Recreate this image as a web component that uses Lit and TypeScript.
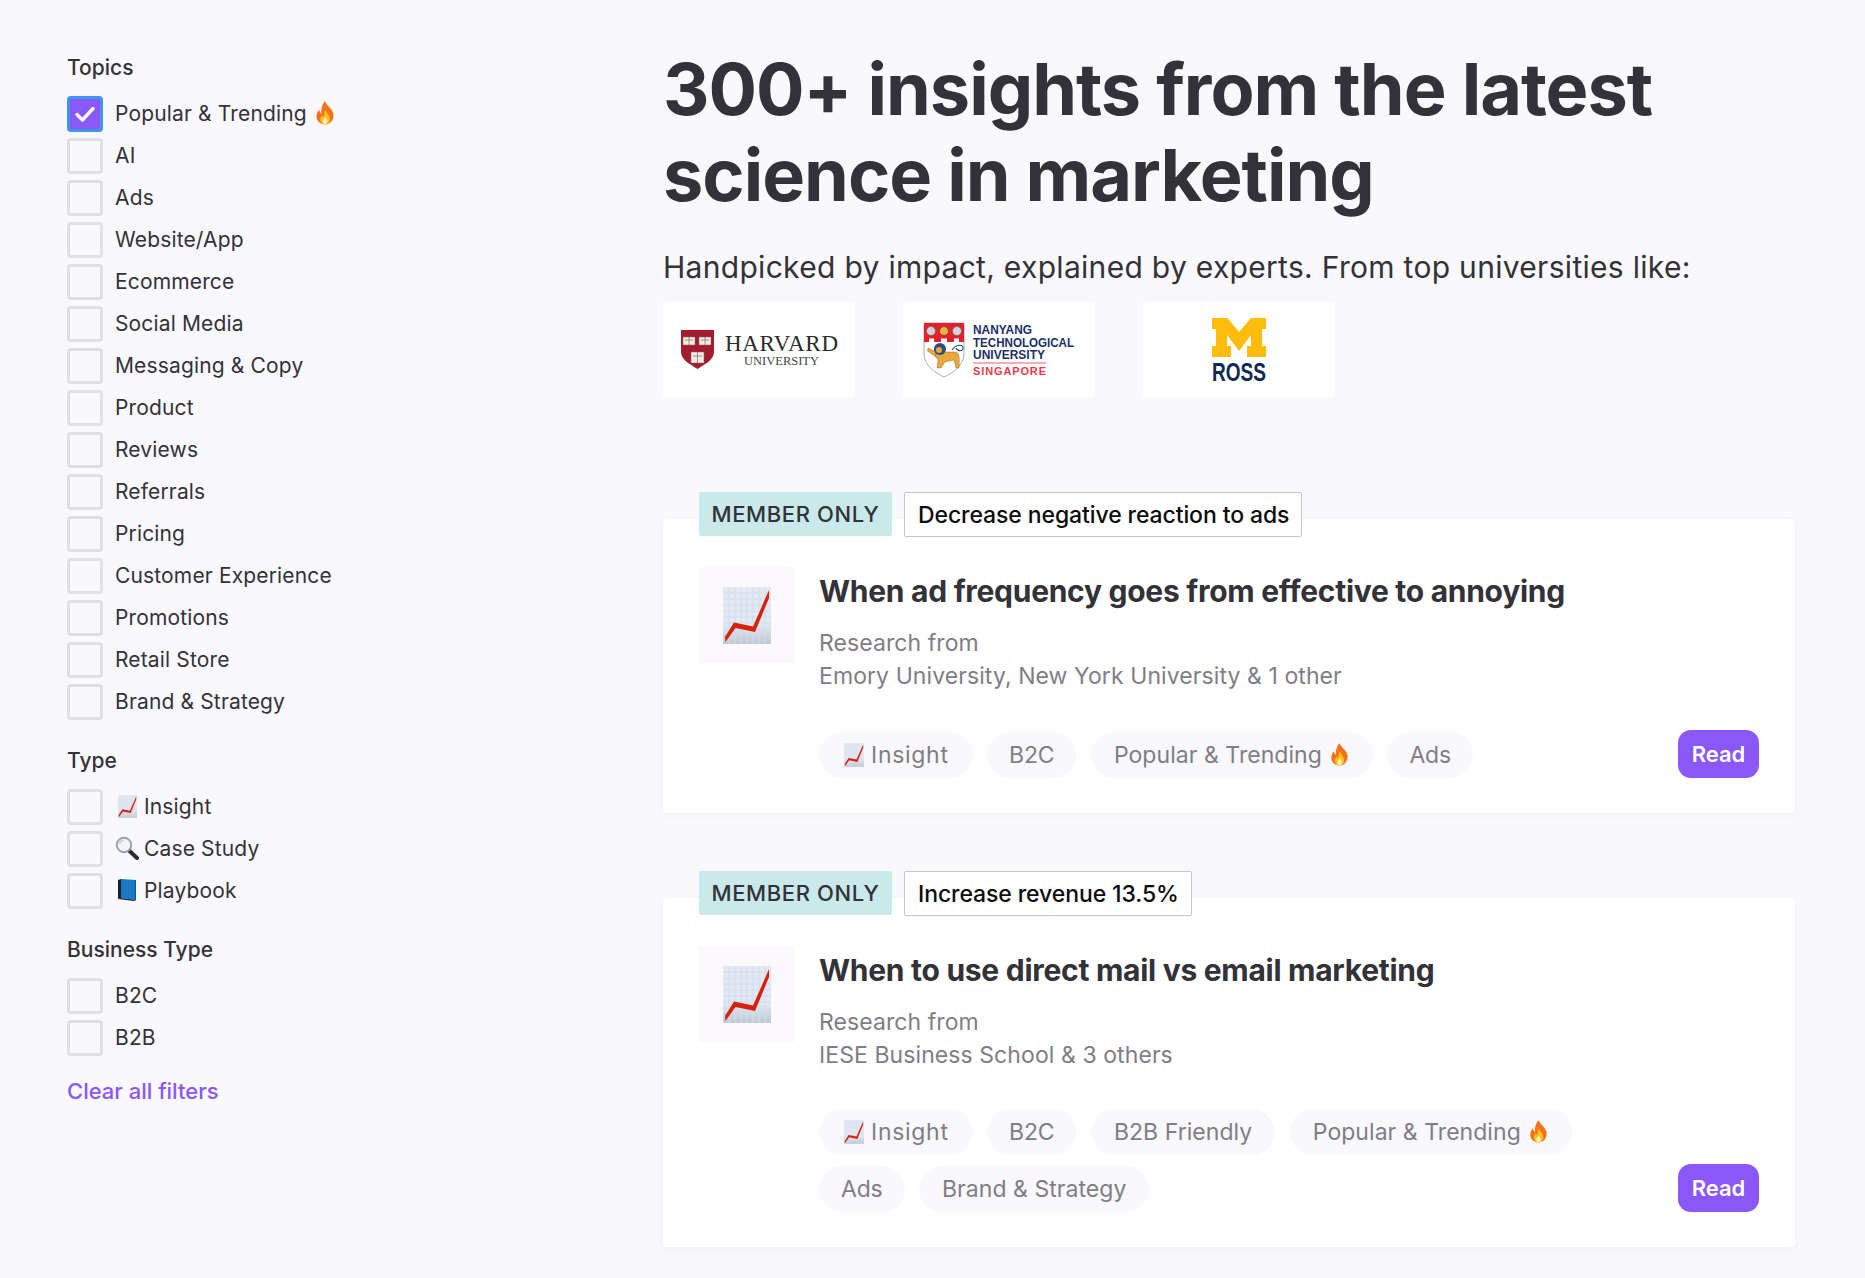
import { LitElement, html, css, nothing } from "lit";
import { customElement } from "lit/decorators.js";

const chart = (size: number) => html`<svg class="emo" width=${size} height=${Math.round(size * 1.19)} viewBox="0 0 48 57" aria-hidden="true">
  <defs><linearGradient id="cg" x1="0" y1="0" x2="0" y2="1"><stop offset="0" stop-color="#e4e9f1"/><stop offset="0.65" stop-color="#e2e9f3"/><stop offset="1" stop-color="#bfc8d5"/></linearGradient></defs>
  <rect width="48" height="57" fill="url(#cg)"/>
  <path d="M0 6H48M0 12H48M0 18H48M0 24H48M0 30H48M0 36H48M0 42H48M6 0V57M12 0V57M18 0V57M24 0V57M30 0V57M36 0V57M42 0V57" stroke="#d0deee" stroke-width="1" fill="none"/>
  <polygon points="2,50 11,35.5 30,39.5 46,3 46,11 32,45 12.5,41 2.5,55" fill="#d8200c"/>
</svg>`;

const fire = (size: number) => html`<svg class="emo" width=${size} height=${Math.round(size * 1.1)} viewBox="0 0 20 22" aria-hidden="true">
  <path d="M10 0 C11 4 16 6 17.5 11 C18.8 16 15.5 21.5 10 21.5 C4.5 21.5 1.2 17 2.4 12 C3 10 4 8.8 4.8 8 C5 10 5.7 11 6.8 11.4 C6 7 7.6 3 10 0Z" fill="#f5721b"/>
  <path d="M10.5 8 C11 11 14.5 13 14.5 16.5 C14.5 19.5 12.5 21.5 10 21.5 C7.5 21.5 5.6 19.5 5.6 17 C5.6 15 6.8 13.8 7.6 13 C8 14 8.4 14.6 9 14.8 C8.8 12.5 9.4 10 10.5 8Z" fill="#fcc21b"/>
  <path d="M10.2 14.5 C10.6 16 12.2 17 12.2 18.6 C12.2 20.2 11.2 21.5 10 21.5 C8.8 21.5 7.9 20.3 7.9 19 C7.9 17.2 9.6 16.4 10.2 14.5Z" fill="#fff0b3"/>
</svg>`;

const glass = html`<svg class="emo" width="24" height="24" viewBox="0 0 24 24" aria-hidden="true">
  <path d="M13.5 14 L22 22" stroke="#2c2c30" stroke-width="4" stroke-linecap="round"/>
  <circle cx="9" cy="9" r="7.2" fill="#f3f5f8" stroke="#9aa0a8" stroke-width="2"/>
  <path d="M4.5 8 A5 5 0 0 1 9 4" stroke="#c9ced6" stroke-width="1.5" fill="none"/>
</svg>`;

const book = html`<svg class="emo" width="20" height="22" viewBox="0 0 20 22" aria-hidden="true">
  <path d="M1 1 L4 0 L4 19 L1 20Z" fill="#16222f"/>
  <path d="M4 0 L19 1 L19 21 L4 19Z" fill="#1b78c6"/>
  <path d="M17.6 1 L19 1 L19 21 L17.6 20.8Z" fill="#0f5a9c"/>
  <path d="M1 20 L4 19 L19 21 L17 22Z" fill="#0c2233"/>
</svg>`;

type Tag = { label: string; pre?: boolean; post?: boolean; tight?: boolean };
type Card = { badge: string; title: string; from: string; tags: Tag[] };

const topics = ["Popular & Trending", "AI", "Ads", "Website/App", "Ecommerce", "Social Media", "Messaging & Copy", "Product", "Reviews", "Referrals", "Pricing", "Customer Experience", "Promotions", "Retail Store", "Brand & Strategy"];

const cards: Card[] = [
  {
    badge: "Decrease negative reaction to ads",
    title: "When ad frequency goes from effective to annoying",
    from: "Emory University, New York University & 1 other",
    tags: [{ label: "Insight", pre: true }, { label: "B2C", tight: true }, { label: "Popular & Trending", post: true }, { label: "Ads", tight: true }],
  },
  {
    badge: "Increase revenue 13.5%",
    title: "When to use direct mail vs email marketing",
    from: "IESE Business School & 3 others",
    tags: [{ label: "Insight", pre: true }, { label: "B2C", tight: true }, { label: "B2B Friendly" }, { label: "Popular & Trending", post: true }, { label: "Ads", tight: true }, { label: "Brand & Strategy" }],
  },
];

@customElement("app-root")
export class AppRoot extends LitElement {
  static styles = css`
    :host { display: block; min-height: 1278px; background: #f9f8fc; color: #333238; font-family: "Inter", "Liberation Sans", sans-serif; overflow: hidden; }
    .page { display: grid; grid-template-columns: 663px 1132px; }
    .side { padding: 56px 0 0 67px; }
    .side h3 { margin: 0 0 16px; font-size: 21px; font-weight: 500; line-height: 24px; }
    .group { margin-bottom: 29px; }
    .row { display: flex; align-items: center; gap: 12px; height: 36px; margin-bottom: 6px; font-size: 21px; letter-spacing: 0.15px; }
    .row:last-child { margin-bottom: 0; }
    .box { width: 36px; height: 36px; box-sizing: border-box; border: 3px solid #e0dfe3; border-radius: 4px; flex: none; display: flex; align-items: center; justify-content: center; }
    .box.on { background: #8b57f6; border-color: #3d97ee; }
    .txt { display: flex; align-items: center; gap: 7px; padding-bottom: 2px; }
    .lead { width: 24px; flex: none; display: flex; justify-content: center; margin-right: -2px; }
    .emo { flex: none; display: block; }
    .clear { margin-top: -6px; font-size: 22px; line-height: 24px; color: #8b57f6; font-weight: 500; }
    .main { padding-top: 46px; }
    h1 { margin: 0 0 31px; font-size: 72px; line-height: 86px; font-weight: 700; color: #333238; letter-spacing: -1px; }
    .sub { font-size: 30px; letter-spacing: 0.3px; line-height: 36px; margin-bottom: 17px; }
    .logos { display: flex; gap: 48px; margin-bottom: 95px; }
    .logo { width: 192px; height: 95px; background: #fff; display: block; }
    .tabs { display: flex; gap: 12px; padding-left: 36px; margin-bottom: -18px; position: relative; z-index: 1; }
    .member { height: 44px; width: 193px; display: flex; align-items: center; justify-content: center; background: #c9e9ea; border-radius: 2px; font-size: 22px; font-weight: 500; color: #333238; letter-spacing: 0.6px; }
    .goal { height: 45px; box-sizing: border-box; padding: 0 12px 0 13px; display: flex; align-items: center; background: #fff; border: 1px solid #c8c7cc; border-radius: 2px; font-size: 23px; letter-spacing: -0.1px; font-weight: 500; color: #0c0c0e; }
    .card { background: #fff; padding: 48px 36px 35px; display: flex; gap: 24px; border-radius: 4px; box-shadow: 0 2px 8px rgba(60,50,90,0.04); margin-bottom: 58px; }
    .thumb { width: 96px; height: 96px; background: #fbf9fc; flex: none; display: flex; align-items: center; justify-content: center; }
    .body { flex: 1; min-width: 0; }
    h2 { margin: 0 0 12px; font-size: 30px; line-height: 48px; font-weight: 700; color: #333238; letter-spacing: -0.28px; }
    .from { font-size: 23px; letter-spacing: 0.08px; line-height: 33px; color: #7f7e85; }
    .foot { display: flex; align-items: flex-end; justify-content: space-between; gap: 40px; margin-top: 37px; }
    .chips { display: flex; flex-wrap: wrap; gap: 11px 14.5px; }
    .chip { height: 46px; box-sizing: border-box; padding: 0 23px 1px; display: flex; align-items: center; gap: 7px; background: #f9f8fc; border-radius: 23px; font-size: 23px; letter-spacing: 0.05px; color: #7f7e85; }
    .chip.pre { padding-left: 25px; padding-right: 24px; letter-spacing: 0.7px; }
    .chip.tight { padding: 0 22px 1px; letter-spacing: -0.2px; }
    .read { flex: none; width: 81px; height: 48px; display: flex; align-items: center; justify-content: center; background: #8b57f6; color: #fff; border-radius: 13px; font-size: 22px; font-weight: 600; }
  `;

  private row(label: string, checked = false, lead: unknown = nothing, trail: unknown = nothing) {
    return html`<div class="row">
      <span class="box ${checked ? "on" : ""}">${checked ? html`<svg width="22" height="18" viewBox="0 0 22 18" aria-hidden="true"><path d="M3 9.5 L8.5 15 L19 3.5" stroke="#fff" stroke-width="3.4" fill="none" stroke-linecap="round" stroke-linejoin="round"/></svg>` : nothing}</span>
      <span class="txt">${lead === nothing ? nothing : html`<span class="lead">${lead}</span>`}<span>${label}</span>${trail}</span>
    </div>`;
  }

  private harvard() {
    return html`<svg class="logo" viewBox="0 0 192 95" aria-label="Harvard University">
      <path d="M18 28 H51 V50 C51 58 42 62 34.5 67 C27 62 18 58 18 50Z" fill="#a51c30"/>
      <g fill="#f1ece6" stroke="#7d6a60" stroke-width=".5">
        <rect x="20" y="35" width="12" height="8"/><rect x="36" y="35" width="12" height="8"/><rect x="28" y="50" width="13" height="11"/>
      </g>
      <path d="M26 35V43M42 35V43M34.5 50V61M22 38H30M38 38H46M30 54H39" stroke="#6b5a50" stroke-width=".6"/>
      <text x="62" y="49" font-family="Liberation Serif, serif" font-size="23" fill="#2b2b2b" textLength="113" lengthAdjust="spacing">HARVARD</text>
      <text x="81" y="63" font-family="Liberation Serif, serif" font-size="12.5" fill="#444" textLength="75" lengthAdjust="spacing">UNIVERSITY</text>
    </svg>`;
  }

  private ntu() {
    const navy = "#1c2f66";
    return html`<svg class="logo" viewBox="0 0 192 95" aria-label="Nanyang Technological University Singapore">
      <path d="M21 21 H61 V52 C61 63 50 71 41 75 C32 71 21 63 21 52Z" fill="#fff" stroke="#8a8a8a" stroke-width=".7"/>
      <path d="M21 21 H61 V40 H56 V36.5 H51 V40 H44 V36.5 H38 V40 H31 V36.5 H26 V40 H21Z" fill="#e5202e"/>
      <circle cx="28" cy="29" r="4.5" fill="#d8d0d8" stroke="#666" stroke-width=".7"/><circle cx="41" cy="29" r="4.5" fill="#e9b24a" stroke="#5b3a10" stroke-width=".7"/><circle cx="54" cy="29" r="4.5" fill="#d8d0d8" stroke="#666" stroke-width=".7"/>
      <path d="M34 50 L25 46 L24.5 49 L33 55Z" fill="#e8a83a" stroke="#4d3a1a" stroke-width=".3"/>
      <path d="M33 50 L52 50 C56 50 57 54 56 66 L53 66 L51 58 L42 60 L38 66 L34 66 L35 58 C33 56 32 53 33 50Z" fill="#e8a83a" stroke="#4d3a1a" stroke-width=".3"/>
      <circle cx="37" cy="47" r="6" fill="#2d4a80"/><circle cx="36" cy="48" r="3" fill="#e8a83a"/>
      <path d="M49 48 C53 42 60 42 60 46 C60 50 54 49 53 46" stroke="#2d4a80" stroke-width="1.1" fill="none"/>
      <g font-family="Liberation Sans, sans-serif" font-weight="700" font-size="12.5" fill=${navy}>
        <text x="70" y="32" textLength="59" lengthAdjust="spacingAndGlyphs">NANYANG</text>
        <text x="70" y="44.5" textLength="101" lengthAdjust="spacingAndGlyphs">TECHNOLOGICAL</text>
        <text x="70" y="56.5" textLength="72" lengthAdjust="spacingAndGlyphs">UNIVERSITY</text>
      </g>
      <rect x="70" y="60.5" width="73" height="1" fill="#f2606a"/>
      <text x="70" y="73" font-family="Liberation Sans, sans-serif" font-weight="700" font-size="11" fill="#ee3a46" textLength="73" lengthAdjust="spacing">SINGAPORE</text>
    </svg>`;
  }

  private ross() {
    return html`<svg class="logo" viewBox="0 0 192 95" aria-label="Michigan Ross">
      <polygon points="69,16 84.5,16 96,30 108,16 123,16 123,27 119,27 119,44 123,44 123,55 104,55 104,44 108,44 108,33 96,49 84,33 84,44 88,44 88,55 69,55 69,44 73,44 73,27 69,27" fill="#ffbc0d"/>
      <text x="69" y="79" font-family="Liberation Sans, sans-serif" font-weight="700" font-size="25" fill="#0f2a56" textLength="54" lengthAdjust="spacingAndGlyphs">ROSS</text>
    </svg>`;
  }

  private card(c: Card) {
    return html`
      <div class="tabs"><span class="member">MEMBER ONLY</span><span class="goal">${c.badge}</span></div>
      <article class="card">
        <div class="thumb">${chart(48)}</div>
        <div class="body">
          <h2>${c.title}</h2>
          <div class="from">Research from<br />${c.from}</div>
          <div class="foot">
            <div class="chips">
              ${c.tags.map((t) => html`<span class="chip ${t.pre ? "pre" : ""} ${t.tight ? "tight" : ""}">${t.pre ? chart(20) : nothing}<span>${t.label}</span>${t.post ? fire(21) : nothing}</span>`)}
            </div>
            <span class="read">Read</span>
          </div>
        </div>
      </article>`;
  }

  render() {
    return html`<div class="page">
      <aside class="side">
        <div class="group">
          <h3>Topics</h3>
          ${topics.map((t, i) => this.row(t, i === 0, nothing, i === 0 ? fire(22) : nothing))}
        </div>
        <div class="group">
          <h3>Type</h3>
          ${this.row("Insight", false, chart(19))}
          ${this.row("Case Study", false, glass)}
          ${this.row("Playbook", false, book)}
        </div>
        <div class="group">
          <h3>Business Type</h3>
          ${this.row("B2C")}
          ${this.row("B2B")}
        </div>
        <div class="clear">Clear all filters</div>
      </aside>
      <main class="main">
        <h1>300+ insights from the latest<br />science in marketing</h1>
        <div class="sub">Handpicked by impact, explained by experts. From top universities like:</div>
        <div class="logos">${this.harvard()}${this.ntu()}${this.ross()}</div>
        ${cards.map((c) => this.card(c))}
      </main>
    </div>`;
  }
}
